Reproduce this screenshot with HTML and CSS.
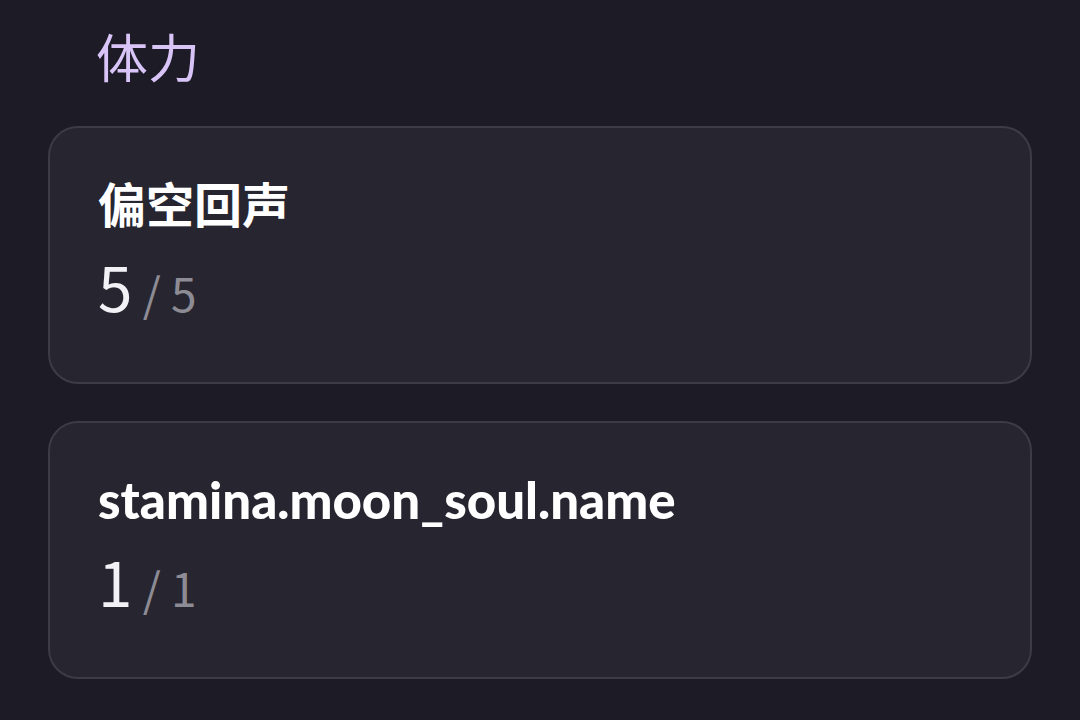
FILE: index.html
```html
<!DOCTYPE html>
<html lang="zh">
<head>
<meta charset="utf-8">
<link rel="stylesheet" href="styles.css">
</head>
<body>
<main class="page">
  <h1 class="section-title">体力</h1>
  <section class="card">
    <div class="card-name">偏空回声</div>
    <div class="card-value"><span class="cur">5</span><span class="max"> / 5</span></div>
  </section>
  <section class="card">
    <div class="card-name" lang="en">stamina.moon_soul.name</div>
    <div class="card-value"><span class="cur">1</span><span class="max"> / 1</span></div>
  </section>
</main>
</body>
</html>
```
FILE: styles.css
```css
html, body {
  margin: 0;
  padding: 0;
  background: #1c1b26;
  height: 100%;
}
body {
  font-family: "Noto Sans CJK SC", "Noto Sans", sans-serif;
  color: #f2f1f6;
}
.page {
  display: flex;
  flex-direction: column;
  gap: 37px;
  padding: 12px 48px 0 48px;
}
.section-title {
  margin: 0 0 -11px 48px;
  font-size: 52px;
  font-weight: 400;
  line-height: 88px;
  color: #d8c4f6;
}
.card {
  background: #272630;
  border: 2px solid #3c3b47;
  border-radius: 30px;
  padding: 42px 48px 32px 48px;
  display: flex;
  flex-direction: column;
}
.card-name {
  font-family: "Lato", "Noto Sans CJK SC", sans-serif;
  font-size: 48px;
  font-weight: 700;
  line-height: 70px;
  color: #ffffff;
}
.card-name:lang(en) {
  font-size: 51px;
  font-weight: 900;
}
.card-value {
  line-height: 90px;
  white-space: pre;
}
.cur {
  font-size: 62px;
  color: #f2f1f6;
}
.max {
  font-size: 46px;
  color: #8d8c95;
}
```
